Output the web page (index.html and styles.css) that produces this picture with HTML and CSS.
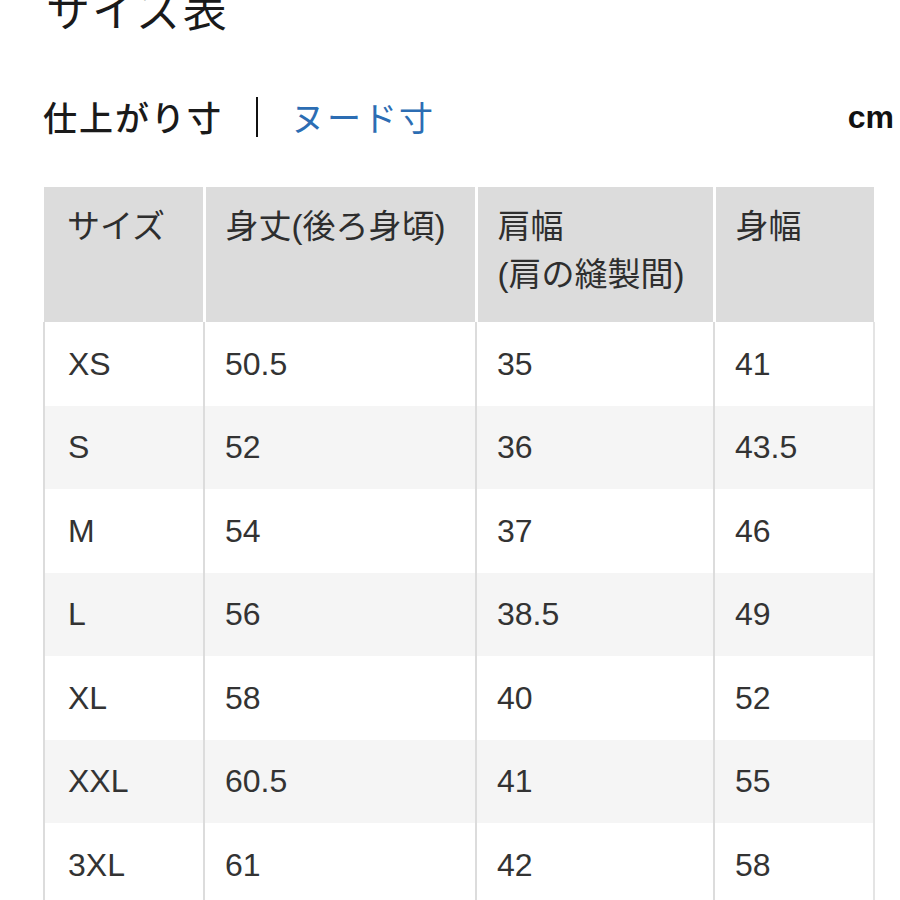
FILE: index.html
```html
<!DOCTYPE html>
<html lang="ja">
<head>
<meta charset="utf-8">
<title>サイズ表</title>
<link rel="stylesheet" href="styles.css">
</head>
<body>
<div class="page">
  <h1 class="title">サイズ表</h1>
  <div class="tabs">
    <div class="tab-group">
      <span class="tab tab-active">仕上がり寸</span>
      <span class="tab-sep"></span>
      <span class="tab tab-link">ヌード寸</span>
    </div>
    <span class="unit">cm</span>
  </div>
  <table class="size-table">
    <colgroup>
      <col class="c1">
      <col class="c2">
      <col class="c3">
      <col class="c4">
    </colgroup>
    <thead>
      <tr>
        <th>サイズ</th>
        <th>身丈(後ろ身頃)</th>
        <th>肩幅<br>(肩の縫製間)</th>
        <th>身幅</th>
      </tr>
    </thead>
    <tbody>
      <tr><td>XS</td><td>50.5</td><td>35</td><td>41</td></tr>
      <tr><td>S</td><td>52</td><td>36</td><td>43.5</td></tr>
      <tr><td>M</td><td>54</td><td>37</td><td>46</td></tr>
      <tr><td>L</td><td>56</td><td>38.5</td><td>49</td></tr>
      <tr><td>XL</td><td>58</td><td>40</td><td>52</td></tr>
      <tr><td>XXL</td><td>60.5</td><td>41</td><td>55</td></tr>
      <tr><td>3XL</td><td>61</td><td>42</td><td>58</td></tr>
    </tbody>
  </table>
</div>
</body>
</html>
```

FILE: styles.css
```css
html, body {
  margin: 0;
  padding: 0;
  background: #ffffff;
}

body {
  font-family: "Liberation Sans", "Noto Sans CJK JP", sans-serif;
  color: #222;
  overflow: hidden;
}

.page {
  padding: 0 0 0 43px;
}

.title {
  margin: -13px 0 0 3px;
  font-family: "Noto Sans CJK JP", sans-serif;
  font-weight: 400;
  font-size: 44px;
  line-height: 42px;
  color: #1a1a1a;
  letter-spacing: 2px;
}

.tabs {
  display: flex;
  justify-content: space-between;
  align-items: center;
  margin-top: 68px;
  padding-right: 4px;
  height: 40px;
}

.tab-group {
  display: flex;
  align-items: center;
}

.tab {
  font-family: "Noto Sans CJK JP", sans-serif;
  font-size: 34px;
  line-height: 40px;
  letter-spacing: 2px;
}

.tab-active {
  font-weight: 500;
  color: #1a1a1a;
}

.tab-sep {
  display: inline-block;
  width: 2px;
  height: 40px;
  background: #111;
  margin: 0 33px 0 33px;
}

.tab-link {
  color: #2c6db3;
  font-weight: 400;
}

.unit {
  font-family: "Liberation Sans", sans-serif;
  font-weight: 700;
  font-size: 32px;
  color: #111;
  margin-right: 2px;
}

.size-table {
  margin-top: 50px;
  width: 830px;
  border-collapse: collapse;
  table-layout: fixed;
  font-size: 32px;
}

.size-table .c1 { width: 160px; }
.size-table .c2 { width: 272px; }
.size-table .c3 { width: 238px; }
.size-table .c4 { width: 160px; }

.size-table th {
  background: #dcdcdc;
  font-weight: 400;
  font-size: 33px;
  text-align: left;
  vertical-align: top;
  line-height: 48px;
  height: 96px;
  padding: 16px 4px 23px 20px;
  color: #2e2e2e;
  border-left: 3px solid #ffffff;
  white-space: nowrap;
}

.size-table th:first-child {
  border-left: none;
  padding-left: 23px;
}

.size-table td {
  height: 83.5px;
  padding: 0 8px 0 20px;
  line-height: 40px;
  vertical-align: middle;
  color: #333;
  border-left: 2px solid #dcdcdc;
}

.size-table td:first-child {
  padding-left: 23px;
}

.size-table td:last-child {
  border-right: 2px solid #e4e4e4;
}

.size-table tbody tr:nth-child(even) {
  background: #f5f5f5;
}
```
